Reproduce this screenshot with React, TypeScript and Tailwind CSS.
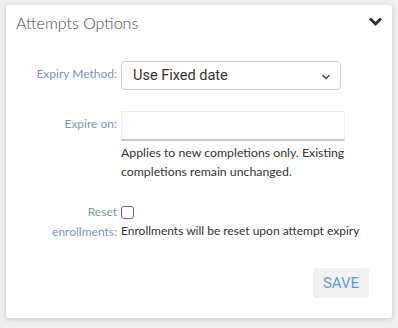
import { ChevronDown } from "lucide-react";

export default function App() {
  const label = "text-right text-[12px] text-[#8093b6] leading-[20px]";
  return (
    <div className="w-[398px] h-[328px] bg-[#efefef] pt-[5px] pl-[6px] font-['Lato','Liberation_Sans',sans-serif]">
      <div className="w-[386px] h-[313px] bg-white rounded-[3px] shadow-[0_1px_5px_rgba(0,0,0,0.18)] relative">
        <div className="flex items-center justify-between pl-[10px] pr-[9px] pt-[5px] h-[30px]">
          <h3 className="text-[16px] font-light text-[#4a4a4a] leading-[22px]">Attempts Options</h3>
          <svg width="15" height="11" viewBox="0 0 15 11" className="mt-[-2px]">
            <path d="M2 2.5 L7.5 8 L13 2.5" fill="none" stroke="#333" strokeWidth="3" />
          </svg>
        </div>

        <div className="grid grid-cols-[111px_1fr] gap-x-[4px] mt-[26px]">
          <div className={label + " pt-[3px]"}>Expiry Method:</div>
          <div className="relative w-[220px] h-[29px] border border-[#ccc] rounded-[4px] flex items-center pl-[11px] font-['Roboto','Liberation_Sans',sans-serif] text-[14.5px] text-[#333]">
            Use Fixed date
            <ChevronDown size={12} strokeWidth={3} className="absolute right-[8px] top-[9px] text-[#5b3c6b]" />
          </div>

          <div className={label + " pt-[3px] mt-[21px]"}>Expire on:</div>
          <div className="mt-[21px]">
            <div className="w-[224px] h-[30px] border border-[#eee] border-b-2 border-b-[#c8c8c8]" />
            <p className="text-[12.3px] text-[#333] leading-[19px] mt-[2px] w-[226px]">
              Applies to new completions only. Existing completions remain unchanged.
            </p>
          </div>

          <div className={label + " mt-[21px]"}>
            Reset
            <br />
            enrollments:
          </div>
          <div className="mt-[21px]">
            <div className="w-[13px] h-[13px] border-[1.5px] border-[#7a5a8c] rounded-[3px] mt-[4px]" />
            <div className="text-[12px] text-[#333] leading-[20px] mt-[2px]">
              Enrollments will be reset upon attempt expiry
            </div>
          </div>
        </div>

        <div className="flex justify-end pr-[23px] mt-[26px]">
          <button className="w-[56px] h-[30px] bg-[#f1f1f1] rounded-[3px] text-[#5a9be6] text-[15px] font-['Roboto','Liberation_Sans',sans-serif]">
            SAVE
          </button>
        </div>
      </div>
    </div>
  );
}
